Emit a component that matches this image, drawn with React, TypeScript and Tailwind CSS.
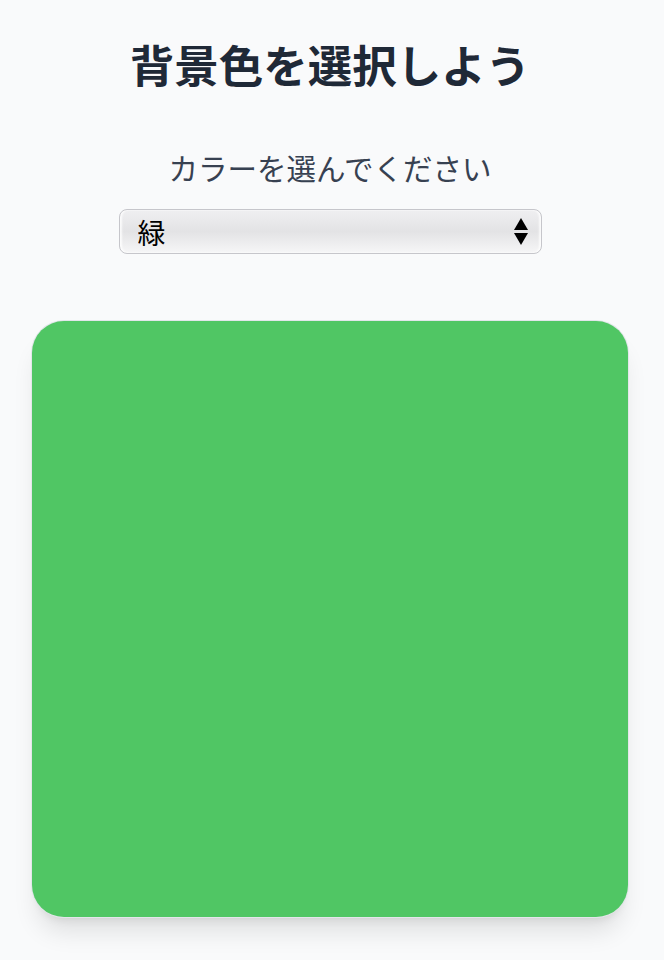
import React, { useState } from "react";

const colors: { label: string; value: string }[] = [
  { label: "赤", value: "#ef4444" },
  { label: "青", value: "#3b82f6" },
  { label: "緑", value: "#50c664" },
  { label: "黄", value: "#facc15" },
  { label: "紫", value: "#a855f7" },
];

export default function App() {
  const [selected, setSelected] = useState("緑");
  const current = colors.find((c) => c.label === selected) ?? colors[2];

  return (
    <div
      className="min-h-screen w-full bg-[#f9fafb] flex flex-col items-center pt-[31px] pl-8 pr-9"
      style={{ fontFamily: '"Noto Sans CJK JP", "Noto Sans", sans-serif' }}
    >
      <h1 className="text-[44.5px] leading-[66px] font-bold text-[#1f2937] text-center whitespace-nowrap">
        背景色を選択しよう
      </h1>
      <p className="mt-[48px] text-[29.5px] leading-[44px] text-[#374151] text-center whitespace-nowrap">
        カラーを選んでください
      </p>
      <div className="relative mt-[20px] w-[423px] h-[45px]">
        <select
          value={selected}
          onChange={(e) => setSelected(e.target.value)}
          className="appearance-none w-full h-full rounded-[8px] border border-[#c6c6cb] bg-linear-to-b from-[#efeff1] via-[#e3e3e5] to-[#f6f6f7] pl-[18px] pr-10 text-[28px] leading-none text-black shadow-[inset_2px_0_2px_rgba(255,255,255,0.8),inset_-2px_0_2px_rgba(255,255,255,0.8)] outline-none"
          style={{ fontFamily: '"Noto Sans CJK JP", "Noto Sans", sans-serif' }}
        >
          {colors.map((c) => (
            <option key={c.label} value={c.label}>
              {c.label}
            </option>
          ))}
        </select>
        <svg
          className="pointer-events-none absolute right-[14px] top-[9px]"
          width="14"
          height="28"
          viewBox="0 0 14 28"
        >
          <polygon points="7,0 14,12 0,12" fill="#000" />
          <polygon points="0,15 14,15 7,27" fill="#000" />
        </svg>
      </div>
      <div
        className="mt-[67px] w-full h-[596px] rounded-[32px] shadow-[0_0_0_1px_#e3e6ea,0_20px_25px_-5px_rgba(0,0,0,0.1),0_8px_10px_-6px_rgba(0,0,0,0.1)]"
        style={{ backgroundColor: current.value }}
      />
    </div>
  );
}
